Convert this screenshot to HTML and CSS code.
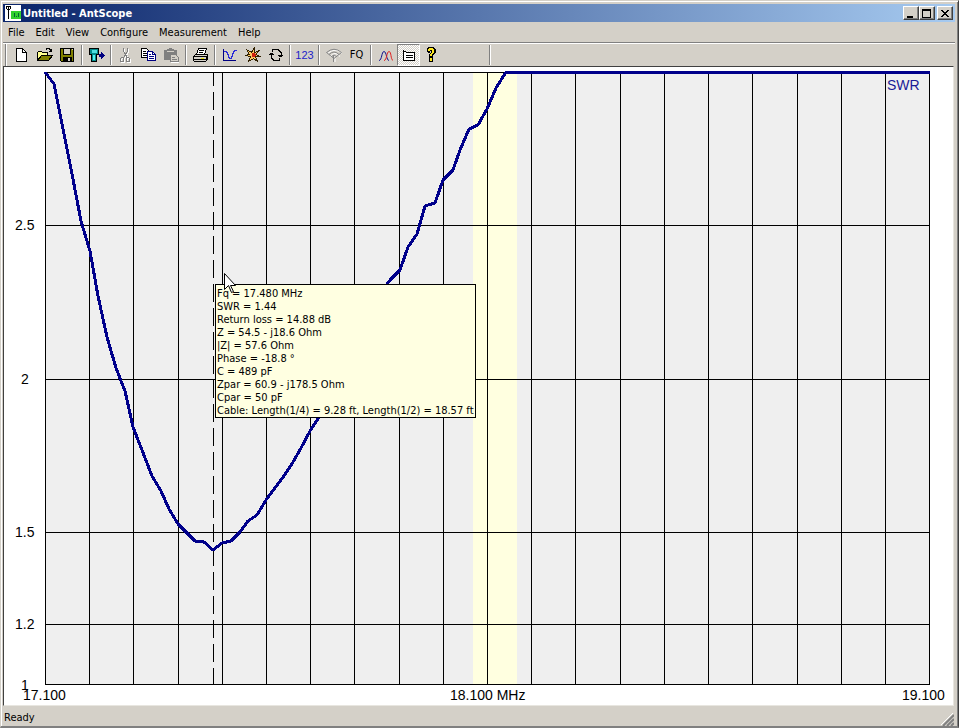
FILE: index.html
```
<!DOCTYPE html>
<html lang="en">
<head>
<meta charset="utf-8">
<title>Untitled - AntScope</title>
<link rel="stylesheet" href="styles.css">
</head>
<body>
<div class="window">
  <header class="titlebar">
    <svg class="app-icon" width="16" height="16" viewBox="0 0 16 16" shape-rendering="crispEdges">
      <path fill="#fff" d="M0 0h16v16H0z"/>
      <path fill="none" stroke="#000" d="M1 1.500h5M3.500 1v13M1.500 2v1.500L3.500 5.500 5.500 3.500V2"/>
      <path fill="#2fd02f" d="M6 6h10v8H6z"/>
      <path fill="#063" d="M9 8h1v4H9zM11 11h1v1h-1zM13 8h1v4h-1z"/>
    </svg>
    <h1 class="title">Untitled - AntScope</h1>
    <div class="caption-buttons">
      <button class="caption" aria-label="Minimize"><svg width="12" height="10" viewBox="0 0 12 10" shape-rendering="crispEdges"><path d="M2 7h6v2H2z"/></svg></button>
      <button class="caption" aria-label="Maximize"><svg width="12" height="10" viewBox="0 0 12 10" shape-rendering="crispEdges"><path fill-rule="evenodd" d="M1 0h9v9H1zM2 2v6h7V2z"/></svg></button>
      <button class="caption close" aria-label="Close"><svg width="12" height="10" viewBox="0 0 12 10" shape-rendering="crispEdges"><path d="M2 1h2v1h1v1h2V2h1V1h2v1H9v1H8v1H7v1h1v1h1v1h1v1H8V7H7V6H5v1H4v1H2V7h1V6h1V5h1V4H4V3H3V2H2z"/></svg></button>
    </div>
  </header>

  <nav class="menubar">
    <button class="menu">File</button>
    <button class="menu">Edit</button>
    <button class="menu">View</button>
    <button class="menu">Configure</button>
    <button class="menu">Measurement</button>
    <button class="menu">Help</button>
  </nav>

  <div class="toolbar" role="toolbar">
    <button class="tool" aria-label="New"><svg width="16" height="16" viewBox="0 0 16 16" shape-rendering="crispEdges"><path fill="#fff" stroke="#000" d="M2.500 1.500h6l4 4v9h-10z"/><path fill="none" stroke="#000" d="M8.500 1.500v4h4"/></svg></button>
    <button class="tool" aria-label="Open"><svg width="16" height="16" viewBox="0 0 16 16" shape-rendering="crispEdges"><path fill="#ffff90" stroke="#000" d="M.5 13.500v-8l1-1h3l1 1h5v3"/><path fill="#808000" stroke="#000" d="M.5 13.500l4-5h11l-4 5z"/><path fill="none" stroke="#000" d="M9 2.500l1-1h2l2 2M14.500 1.500v3M12 4.500h3"/></svg></button>
    <button class="tool" aria-label="Save"><svg width="16" height="16" viewBox="0 0 16 16" shape-rendering="crispEdges"><path fill="#808000" stroke="#000" d="M.5 1.500h13v13h-12l-1-1z"/><path fill="#d4d0c8" stroke="#000" d="M3.500 1.500h7v6h-7z"/><path d="M3 10h9v5H3z"/><path fill="#d4d0c8" d="M8 11h2v3H8zM12 2h1v1h-1z"/></svg></button>
    <span class="divider"></span>
    <button class="tool" aria-label="Single point"><svg width="16" height="16" viewBox="0 0 16 16" shape-rendering="crispEdges"><path fill="#008b8b" stroke="#000" d="M.5 1.500h9v6h-2v7h-5v-7h-2z"/><path fill="#4fe0e0" d="M3 3h5v3H3z"/><path fill="#55f0f0" d="M4 8h2v5H4z"/><path fill="#000080" d="M10 7h2V5h1v1h1v1h1v1h1v1h-1v1h-1v1h-1v1h-1v-2h-2z"/></svg></button>
    <span class="divider"></span>
    <button class="tool" aria-label="Cut" disabled><svg width="16" height="16" viewBox="0 0 16 16" shape-rendering="crispEdges"><g fill="none" stroke="#fff" transform="translate(1 1)"><path d="M5.500 1v3l4 7M9.500 1v3l-4 7"/><path d="M3.500 10.500h2v4h-3v-3zM8.500 10.500h2l1 1v3h-3z"/></g><g fill="none" stroke="#808080"><path d="M5.500 1v3l4 7M9.500 1v3l-4 7"/><path d="M3.500 10.500h2v4h-3v-3zM8.500 10.500h2l1 1v3h-3z"/></g></svg></button>
    <button class="tool" aria-label="Copy"><svg width="16" height="16" viewBox="0 0 16 16" shape-rendering="crispEdges"><path fill="#fff" stroke="#000" d="M.5 1.500h5l3 3v6h-8z"/><path stroke="#000" d="M2 4.500h3M2 6.500h4M2 8.500h4"/><path fill="#fff" stroke="#000080" d="M6.500 4.500h5l3 3v6h-8z"/><path fill="none" stroke="#000080" d="M11.500 4.500v3h3M8 7.500h2M8 9.500h5M8 11.500h5"/></svg></button>
    <button class="tool" aria-label="Paste" disabled><svg width="16" height="16" viewBox="0 0 16 16" shape-rendering="crispEdges"><path fill="#808080" d="M0 3h3V2h2V1h3v1h2v1h3v10H0z"/><path stroke="#d4d0c8" d="M3 4.500h7"/><path fill="#d4d0c8" stroke="#808080" d="M6.500 7.500h5l3 3v4h-8z"/><path stroke="#808080" d="M8 10.500h3M8 12.500h5"/><path fill="none" stroke="#fff" d="M7 15.500h8"/></svg></button>
    <span class="divider"></span>
    <button class="tool" aria-label="Print"><svg width="16" height="16" viewBox="0 0 16 16" shape-rendering="crispEdges"><path fill="#fff" stroke="#000" d="M5.500 1.500h8l-2 6h-8z"/><path stroke="#000" d="M6 3.500h5M6 5.500h4"/><path fill="#d4d0c8" stroke="#000" d="M2.500 7.500h12v5l-2 2h-11l-1-1v-4z"/><path stroke="#000" d="M1 9.500h12M1 12.500h12M13.500 9v4"/><path fill="#e8e000" d="M8 11h3v1H8z"/></svg></button>
    <span class="divider"></span>
    <button class="tool" aria-label="SWR graph"><svg width="16" height="16" viewBox="0 0 16 16" shape-rendering="crispEdges"><path fill="none" stroke="#000080" d="M1.500 2v12M1 13.500h13"/><path fill="#2828d8" d="M2 4h3v1h1v2h1v3h1v1h1V9h1V6h1V4h1V3h3v1h-2v1h-1v2h-1v3h-1v2H7v-1H6V8H5V6H4V5H2z"/></svg></button>
    <button class="tool" aria-label="Smith chart"><svg width="16" height="16" viewBox="0 0 16 16" shape-rendering="crispEdges"><path fill="#ffc860" stroke="#302000" d="M1.500 2.500L6.500 5.500 9.500 .5 9.500 5.500 14.500 3.500 10.500 7.500 15.500 9.500 10.500 9.500 12.500 14.500 8.500 11.500 3.500 14.500 5.500 9.500.5 8.500 4.500 7.500z"/><path fill="#d02010" d="M7 6h3v1h1v2h-1v1H7z"/></svg></button>
    <button class="tool" aria-label="Cycle"><svg width="16" height="16" viewBox="0 0 16 16" shape-rendering="crispEdges"><path fill="none" stroke="#000" d="M4 4.500l1-2h5l3 3v4M10 8.500h5M11 9.500h3M12 13.500H6l-3-3V6M1 7.500h5M2 6.500h3M11.500 11v3"/></svg></button>
    <span class="divider"></span>
    <button class="tool digits">123</button>
    <span class="divider"></span>
    <button class="tool" aria-label="Radio link" disabled><svg width="16" height="16" viewBox="0 0 16 16"><g fill="none" stroke="#fff"><path d="M1.500 6.500Q9 0 16.500 6.500M4 9.500Q9 3.500 14 9.500M9 8v7"/></g><g fill="none" stroke="#858585"><path d="M.5 5.500Q8 -1 15.500 5.500L8 11.500zM3 7.500Q8 2.500 13 7.500M5.500 9.500Q8 6.500 10.500 9.500M7.500 8v7"/></g></svg></button>
    <button class="tool fq">FQ</button>
    <span class="divider"></span>
    <button class="tool" aria-label="Compare curves"><svg width="16" height="16" viewBox="0 0 16 16"><path fill="none" stroke="#101090" d="M1 13.500c3 0 2.500-9 5-9s2.500 9 5 9"/><path fill="none" stroke="#e02020" d="M6 13.500c3 0 2.500-9 5-9s1.500 8 4 9"/></svg></button>
    <button class="tool pressed" aria-label="Show hint" aria-pressed="true"><svg width="16" height="16" viewBox="0 0 16 16" shape-rendering="crispEdges"><path fill="#fff" stroke="#000" d="M2.500 3.500l3 2h8v8h-11z"/><path stroke="#000" d="M5 8.500h7M5 10.500h7"/></svg></button>
    <button class="tool" aria-label="Help"><svg width="16" height="16" viewBox="0 0 16 16" shape-rendering="crispEdges"><path fill="#000" d="M4 0h6v1h1v1h1v4h-1v1h-1v1H9v2H5V7h1V6h1V4H6v2H4V5H3V1h1zM5 10h4v5H5z"/><path fill="#ffe820" d="M5 1h4v1h1v4H9v1H8v2H6V7h1V6h1V3H6v1H4V2h1zM6 11h2v3H6z"/></svg></button>
    <span class="divider last"></span>
  </div>

  <main class="view">
    <svg class="chart" viewBox="4 67 949 638" role="img" aria-label="SWR versus frequency">
      <g shape-rendering="crispEdges">
        <path fill="#efefef" d="M45 72h885v613H45z"/>
        <path fill="#ffffe0" d="M473 72h44v613h-44z"/>
        <path class="grid" d="M45.500 72v613M89.500 72v613M133.500 72v613M178.500 72v613M222.500 72v613M266.500 72v613M310.500 72v613M354.500 72v613M399.500 72v613M443.500 72v613M487.500 72v613M531.500 72v613M575.500 72v613M620.500 72v613M664.500 72v613M708.500 72v613M752.500 72v613M797.500 72v613M841.500 72v613M885.500 72v613M929.500 72v613"/>
        <path class="grid" d="M45 72.500h885M45 225.500h885M45 379.500h885M45 532.500h885M45 624.500h885M45 684.500h885"/>
        <path class="marker" d="M213.500 73v612"/>
        <polyline class="curve" points="45,72 54,84 63,129 72,174 81,221 90,251 98,296 107,337 116,368 125,391 133,427 142,450 152,476 161,491 169,509 178,524 187,533 195,541 204,542 213,550 222,543 231,541 240,532 248,521 257,515 266,500 275,488 284,476 293,462 301,448 310,431 319,417 328,402 337,383 345,366 354,348 363,330 372,312 381,293 390,280 400,270 408,247 417,234 425,206 435,203 443,180 453,170 460,150 469,129 478,125 487,109 496,88 506,72 930,72"/>
      </g>
      <g class="labels">
        <text x="15" y="230">2.5</text>
        <text x="21" y="384">2</text>
        <text x="15" y="537">1.5</text>
        <text x="15" y="629">1.2</text>
        <text x="21" y="690">1</text>
        <text x="23" y="700">17.100</text>
        <text x="450" y="700">18.100 MHz</text>
        <text x="902" y="700">19.100</text>
        <text class="series" x="887" y="90">SWR</text>
      </g>
    </svg>
    <div class="hint" role="tooltip">
      <div>Fq = 17.480 MHz</div>
      <div>SWR = 1.44</div>
      <div>Return loss = 14.88 dB</div>
      <div>Z = 54.5 - j18.6 Ohm</div>
      <div>|Z| = 57.6 Ohm</div>
      <div>Phase = -18.8 °</div>
      <div>C = 489 pF</div>
      <div>Zpar = 60.9 - j178.5 Ohm</div>
      <div>Cpar = 50 pF</div>
      <div>Cable: Length(1/4) = 9.28 ft, Length(1/2) = 18.57 ft</div>
    </div>
    <svg class="pointer" width="13" height="21" viewBox="0 0 13 21"><path fill="#fff" stroke="#000" d="M.5.500v16l4-4 3 7 2-1-3-6h5z"/></svg>
  </main>

  <footer class="statusbar">
    <span>Ready</span>
    <svg class="grip" width="13" height="13" viewBox="0 0 13 13"><path stroke="#fff" d="M0 12L12 0M4 12L12 4M8 12L12 8"/><path stroke="#808080" stroke-width="2" d="M2 13L13 2M6 13L13 6M10 13L13 10"/></svg>
  </footer>
</div>
</body>
</html>
```
FILE: styles.css
```
* { box-sizing: border-box; }

body {
  margin: 0;
  background: #d4d0c8;
  color: #000;
  font: 11px/13px Tahoma, "DejaVu Sans Condensed", sans-serif;
}

button {
  margin: 0;
  padding: 0;
  border: 0;
  background: none;
  color: inherit;
  font: inherit;
}

.window {
  display: flex;
  flex-direction: column;
  height: 100vh;
  padding: 2px 1px 0 1px;
  border: 1px solid #d4d0c8;
  border-right: 1px solid #404040;
  border-bottom: 2px solid #808080;
  box-shadow: inset 1px 1px #fff, inset -1px 0 #808080;
}

.titlebar {
  display: flex;
  align-items: center;
  flex: none;
  height: 18px;
  margin: 1px 2px 0 1px;
  padding: 0 2px;
  background: linear-gradient(90deg, #0a246a, #a6caf0);
  color: #fff;
}

.title {
  flex: 1;
  margin: 0 0 0 2px;
  font-size: 11px;
  font-weight: bold;
}

.caption-buttons { display: flex; }

.caption {
  display: flex;
  width: 16px;
  height: 14px;
  padding: 2px 1px;
  background: #d4d0c8;
  border: 1px solid;
  border-color: #fff #404040 #404040 #fff;
  box-shadow: inset -1px -1px #808080;
}

.caption.close { margin-left: 2px; }

.menubar {
  display: flex;
  flex: none;
  height: 20px;
  margin: 0 2px 0 1px;
}

.menu { padding: 0 6px 0 5px; }

.toolbar {
  display: flex;
  align-items: center;
  flex: none;
  height: 24px;
  margin: 0 2px 0 1px;
  padding-left: 7px;
  border-top: 1px solid #808080;
  box-shadow: inset 0 1px #fff, inset 2px 0 #d4d0c8, inset 3px 0 #808080, inset 4px 0 #fff;
}

.tool {
  display: flex;
  align-items: center;
  justify-content: center;
  width: 23px;
  height: 22px;
}

.tool.digits {
  color: #1c1cc8;
  font: 11px/16px "Liberation Sans", Arial, sans-serif;
}

.tool.pressed {
  border: 1px solid;
  border-color: #808080 #fff #fff #808080;
  background: repeating-conic-gradient(#fff 0 25%, #d4d0c8 0 50%) 0 0 / 2px 2px;
}

.divider {
  width: 2px;
  height: 20px;
  margin: 0 2px;
  border-left: 1px solid #808080;
  border-right: 1px solid #fff;
}

.divider.last { margin-left: 46px; }

.view {
  position: relative;
  flex: 1;
  min-height: 0;
  margin: 0 3px 0 1px;
  border: 1px solid;
  border-color: #404040 #e8e6e0 #e8e6e0 #404040;
  background: #fff;
}

.chart {
  display: block;
  width: 100%;
  height: 100%;
}

.grid { fill: none; stroke: #000; }

.marker {
  fill: none;
  stroke: #000;
  stroke-dasharray: 18 6;
  stroke-dashoffset: 5;
}

.curve {
  fill: none;
  stroke: #00008b;
  stroke-width: 3;
  stroke-linejoin: round;
}

.labels {
  font-family: Arial, "Liberation Sans", sans-serif;
  font-size: 14px;
}

.series { fill: #1a1a96; }

.hint {
  position: absolute;
  top: 217px;
  left: 211px;
  padding: 2px 1px 0 1px;
  border: 1px solid #000;
  background: #ffffe1;
  white-space: nowrap;
}

.pointer {
  position: absolute;
  top: 206px;
  left: 220px;
}

.statusbar {
  display: flex;
  align-items: center;
  justify-content: space-between;
  flex: none;
  height: 20px;
  padding: 2px 3px 0 2px;
}

.grip { align-self: flex-end; }
```
